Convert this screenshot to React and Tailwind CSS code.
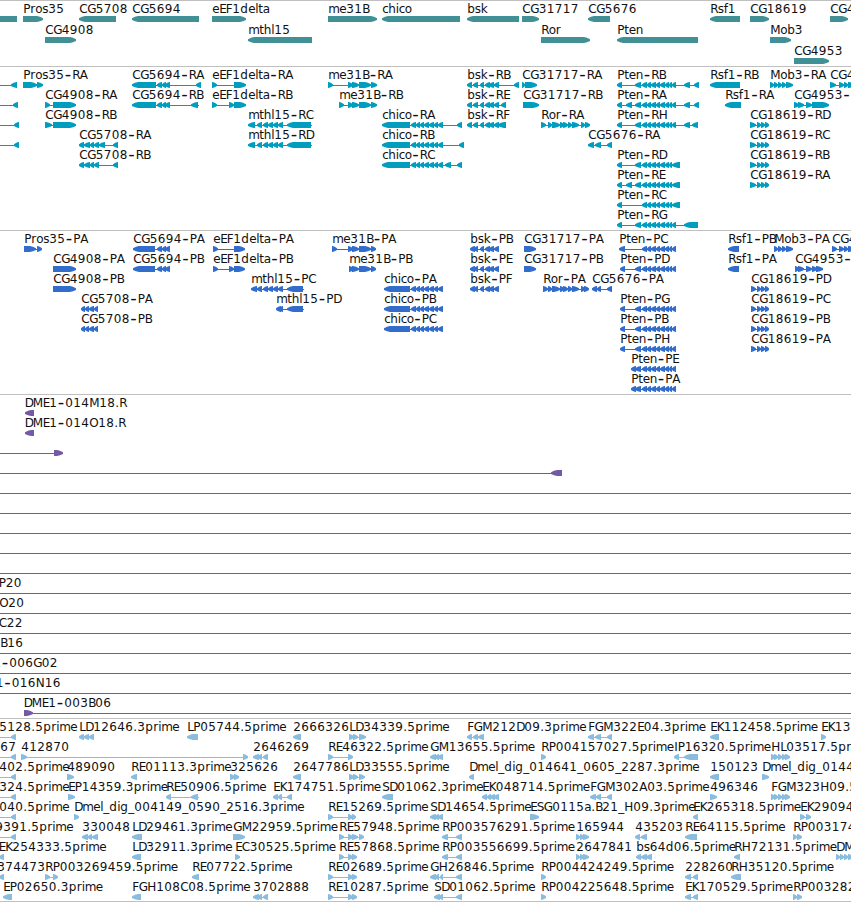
const WIDTH = 851;

// advance of each character in a track label, in px
const advances = {
  A: 8, B: 7, C: 8, D: 8, E: 6.5, F: 6.5, G: 8.5, H: 9, I: 3.5, K: 7, L: 6, M: 10, N: 9, O: 9, P: 7, R: 7.5, S: 7,
  a: 7, b: 7.5, c: 6, d: 8, e: 7, f: 4, g: 8, h: 7.5, i: 3, k: 7, l: 3, m: 11, n: 7.5, o: 7, p: 8, r: 5, s: 6, t: 4.5,
  '.': 4, '-': 8, '_': 6,
};

const pten = '642-647 647-651 651-656 656-660 660-665 665-669 669-672';
const mthl = '257-262 263-268 268-273 273-278 278-283';
const chico = '411-416 416-420 420-424 424-429 429-434 434-438 438-443';
const bsk = '480-484 485-490 489-494 494-499';
const me31 = '352-359 359-371 371-377';
const ror = '548-552 552-560 560-564 563-568 568-572 572-579 581-585';
const cg5694 = '157-162 162-166 165-170';
const cg18619 = '757-761 761-765 765-769';
const hl = '771-775 774-778 778-782 782-786 785-790';

// [row, label, x, strand, exons, line start, line end]
const genes = [
  [0, '', 0, '<', '-20-17'],
  [0, 'Pros35', 23, '>', '23-43'],
  [0, 'CG5708', 79, '<', '79-116'],
  [0, 'CG5694', 132, '<', '132-199'],
  [0, 'eEF1delta', 212, '>', '212-246'],
  [0, 'me31B', 328, '>', '328-377'],
  [0, 'chico', 382, '<', '382-460'],
  [0, 'bsk', 467, '<', '467-519'],
  [0, 'CG31717', 522, '>', '522-539'],
  [0, 'CG5676', 588, '<', '588-610'],
  [0, 'Rsf1', 710, '<', '710-740'],
  [0, 'CG18619', 750, '>', '750-769'],
  [0, 'CG4', 830, '>', '830-848'],
  [1, 'CG4908', 45, '>', '45-76'],
  [1, 'mthl15', 248, '<', '248-312'],
  [1, 'Ror', 541, '>', '541-590'],
  [1, 'Pten', 617, '<', '617-698'],
  [1, 'Mob3', 770, '>', '770-791'],
  [2, 'CG4953', 794, '>', '794-829'],
];

const transcripts = [
  [0, '', 0, '<', '11-17', -5],
  [1, '', 0, '<', '13-18', -5],
  [2, '', 0, '<', '14-19', -5],
  [3, '', 0, '<', '14-19', -5],
  [0, 'Pros35-RA', 23, '>', '23-37 37-43'],
  [0, 'CG5694-RA', 132, '<', `132-156 ${cg5694} 196-201`],
  [0, 'eEF1delta-RA', 212, '>', '212-217 234-246'],
  [0, 'me31B-RA', 328, '>', `328-333 348-353 ${me31}`],
  [0, 'bsk-RB', 467, '<', `467-472 473-478 ${bsk} 514-519`],
  [0, 'CG31717-RA', 522, '>', '522-525 525-537'],
  [0, 'Pten-RB', 617, '<', `617-622 635-641 ${pten} 672-676 684-690 694-699`],
  [0, 'Rsf1-RB', 710, '<', '710-740'],
  [0, 'Mob3-RA', 770, '>', '770-774 774-778 778-782 782-786 786-793'],
  [0, 'CG4', 830, '>', '830-836 839-844 844-848 848-855'],
  [1, 'CG4908-RA', 45, '>', '45-50 53-76'],
  [1, 'CG5694-RB', 132, '<', `132-156 ${cg5694} 191-198`, 132, 199],
  [1, 'eEF1delta-RB', 212, '>', '212-217 229-234 234-246'],
  [1, 'me31B-RB', 339, '>', `339-344 348-353 ${me31}`],
  [1, 'bsk-RE', 467, '<', `467-472 473-478 ${bsk} 501-506`],
  [1, 'CG31717-RB', 523, '>', '523-539'],
  [1, 'Pten-RA', 617, '<', `617-622 626-632 635-641 ${pten} 672-676 684-690 694-699`],
  [1, 'Rsf1-RA', 725, '<', '725-741'],
  [1, 'CG4953-', 794, '>', '794-799 798-804 806-812 812-829'],
  [2, 'CG4908-RB', 45, '>', '45-52 53-76'],
  [2, 'mthl15-RC', 248, '<', `248-255 ${mthl} 287-311`, 248, 312],
  [2, 'chico-RA', 382, '<', `382-410 ${chico} 457-462`],
  [2, 'bsk-RF', 467, '<', `467-472 473-478 ${bsk} 498-506`],
  [2, 'Ror-RA', 541, '>', `541-546 ${ror} 585-590`],
  [2, 'Pten-RH', 617, '<', `617-622 635-641 ${pten} 672-676 684-690 692-698`],
  [2, 'CG18619-RD', 750, '>', `750-756 ${cg18619}`],
  [3, 'CG5708-RA', 79, '<', '79-84 84-90 90-94 94-99 99-105 113-118'],
  [3, 'mthl15-RD', 248, '<', `248-255 ${mthl} 287-311`, 248, 312],
  [3, 'chico-RB', 382, '<', `382-410 ${chico} 459-464`],
  [3, 'CG5676-RA', 588, '<', '588-594 595-601 607-612'],
  [3, 'CG18619-RC', 750, '>', `750-756 ${cg18619}`],
  [4, 'CG5708-RB', 79, '<', '79-84 84-90 90-94 94-99 113-118'],
  [4, 'chico-RC', 382, '<', `382-410 ${chico} 445-451 457-462`],
  [4, 'Pten-RD', 617, '<', `617-622 635-641 ${pten} 672-680`],
  [4, 'CG18619-RB', 750, '>', `750-756 ${cg18619}`],
  [5, 'Pten-RE', 617, '<', `617-622 626-632 635-641 ${pten} 672-680`],
  [5, 'CG18619-RA', 750, '>', `750-756 ${cg18619}`],
  [6, 'Pten-RC', 617, '<', `617-622 ${pten} 672-680`],
  [7, 'Pten-RG', 617, '<', `617-622 635-641 ${pten} 672-676 684-698`],
];

const proteins = [
  [0, 'Pros35-PA', 24, '>', '24-36 37-42'],
  [0, 'CG5694-PA', 133, '<', `133-155 ${cg5694}`],
  [0, 'eEF1delta-PA', 213, '>', '213-218 234-245'],
  [0, 'me31B-PA', 332, '>', '332-337 348-353 352-359 359-371 371-376'],
  [0, 'bsk-PB', 470, '<', `470-475 474-478 ${bsk}`],
  [0, 'CG31717-PA', 524, '>', '524-536'],
  [0, 'Pten-PC', 619, '<', `619-625 ${pten} 672-676`],
  [0, 'Rsf1-PB', 728, '<', '728-739'],
  [0, 'Mob3-PA', 774, '>', '774-778 778-782 782-786 786-793'],
  [0, 'CG4', 832, '>', '832-837 839-844 844-848 848-855'],
  [1, 'CG4908-PA', 53, '>', '53-76'],
  [1, 'CG5694-PB', 133, '<', `133-155 ${cg5694}`],
  [1, 'eEF1delta-PB', 213, '>', '213-218 229-234 234-245'],
  [1, 'me31B-PB', 349, '>', '349-354 352-359 359-371 371-376'],
  [1, 'bsk-PE', 470, '<', `470-475 474-478 ${bsk}`],
  [1, 'CG31717-PB', 524, '>', '524-536'],
  [1, 'Pten-PD', 620, '<', `620-625 635-641 ${pten} 672-676`],
  [1, 'Rsf1-PA', 728, '<', '728-739'],
  [1, 'CG4953-', 795, '>', '795-799 798-804 806-812 812-817 816-823'],
  [2, 'CG4908-PB', 53, '>', '53-76'],
  [2, 'mthl15-PC', 251, '<', `251-257 ${mthl} 287-303`, 251, 304],
  [2, 'chico-PA', 384, '<', `384-410 ${chico}`],
  [2, 'bsk-PF', 470, '<', `470-475 474-478 ${bsk}`],
  [2, 'Ror-PA', 543, '>', `543-548 ${ror} 584-589`],
  [2, 'CG5676-PA', 592, '<', '592-597 597-601 607-612'],
  [2, 'CG18619-PD', 751, '>', `751-756 ${cg18619}`],
  [3, 'CG5708-PA', 81, '<', '81-85 85-89 89-94 94-98'],
  [3, 'mthl15-PD', 276, '<', '276-281 279-283 287-303', 276, 304],
  [3, 'chico-PB', 384, '<', `384-410 ${chico}`],
  [3, 'Pten-PG', 620, '<', `620-625 635-641 ${pten} 672-676`],
  [3, 'CG18619-PC', 751, '>', `751-756 ${cg18619}`],
  [4, 'CG5708-PB', 81, '<', '81-85 85-89 89-94 94-98'],
  [4, 'chico-PC', 384, '<', `384-410 ${chico}`],
  [4, 'Pten-PB', 620, '<', `620-625 635-641 ${pten} 672-676`],
  [4, 'CG18619-PB', 751, '>', `751-756 ${cg18619}`],
  [5, 'Pten-PH', 620, '<', `620-625 635-641 ${pten} 672-676`],
  [5, 'CG18619-PA', 751, '>', `751-756 ${cg18619}`],
  [6, 'Pten-PE', 631, '<', `631-636 635-641 ${pten} 672-676`],
  [7, 'Pten-PA', 631, '<', `631-636 635-641 ${pten} 672-676`],
];

const bacs = [
  [0, 'DME1-014M18.R', 24.5, '<', '25-34'],
  [1, 'DME1-014O18.R', 24.5, '<', '25-34'],
  [2, '', 0, '>', '54-63', -5],
  [3, '', 0, '<', '551-562', -5],
  [4, '', 0, '>', '', -5, WIDTH],
  [5, '', 0, '>', '', -5, WIDTH],
  [6, '', 0, '>', '', -5, WIDTH],
  [7, '', 0, '>', '', -5, WIDTH],
  [8, '', 0, '>', '', -5, WIDTH],
  [9, 'P20', -1.5, '>', '', -5, WIDTH],
  [10, 'O20', -1, '>', '', -5, WIDTH],
  [11, 'C22', -1.5, '>', '', -5, WIDTH],
  [12, 'B16', 0, '>', '', -5, WIDTH],
  [13, '1-006G02', -7, '>', '', -5, WIDTH],
  [14, '1-016N16', -4.5, '>', '', -5, WIDTH],
  [15, 'DME1-003B06', 23.5, '>', '24-33', 24, WIDTH],
];

const ests = [
  [0, '5128.5prime', -1, '<', '11-16', -5],
  [0, 'LD12646.3prime', 79, '<', '79-84 84-89 89-94'],
  [0, 'LP05744.5prime', 187, '<', '187-198'],
  [0, '2666326', 293, '<', '293-301'],
  [0, 'LD34339.5prime', 349, '>', '349-354 353-358 359-366'],
  [0, 'FGM212D09.3prime', 467, '<', '467-472 473-478 478-484'],
  [0, 'FGM322E04.3prime', 588, '<', '588-594 595-601 607-612'],
  [0, 'EK112458.5prime', 710, '<', '710-719'],
  [0, 'EK13', 821, '>', '821-826'],
  [1, '67', 0, '<', '11-16', -5],
  [1, '412870', 21, '>', '21-27 243-248'],
  [1, '2646269', 253, '<', '253-259 258-262 263-268'],
  [1, 'RE46322.5prime', 328, '>', '328-333 348-353'],
  [1, 'GM13655.5prime', 430, '<', '430-436 435-439 438-443'],
  [1, 'RP004157027.5prime', 541, '>', '541-546'],
  [1, 'IP16320.5prime', 674, '<', '674-679 684-698'],
  [1, 'HL03517.5pr', 771, '>', hl],
  [2, '402.5prime', -1, '<', '11-16', -5],
  [2, '489090', 67, '>', '67-74'],
  [2, 'RE01113.3prime', 131, '<', '131-137'],
  [2, '325626', 230, '>', '230-235 234-239'],
  [2, '2647786', 293, '<', '293-301'],
  [2, 'LD33555.5prime', 349, '>', '349-354 353-358 359-365'],
  [2, 'Dmel_dig_014641_0605_2287.3prime', 469, '<', '469-474'],
  [2, '150123', 710, '<', '710-719'],
  [2, 'Dmel_dig_0144', 762, '>', '762-769'],
  [3, '324.5prime', -1, '<', '11-16', -5],
  [3, 'EP14359.3prime', 68, '>', '68-75'],
  [3, 'RE50906.5prime', 166, '<', '166-171 191-198', 166, 199],
  [3, 'EK174751.5prime', 273, '<', '273-278 278-282 287-292'],
  [3, 'SD01062.3prime', 382, '<', '382-393'],
  [3, 'EK048714.5prime', 482, '<', '482-487 487-491 490-495 494-499'],
  [3, 'FGM302A03.5prime', 590, '<', '590-596 596-601 607-612'],
  [3, '496346', 710, '>', '710-717'],
  [3, 'FGM323H09.5', 771, '>', hl],
  [4, '040.5prime', -1, '<', '11-16', -5],
  [4, 'Dmel_dig_004149_0590_2516.3prime', 74, '>', '74-79'],
  [4, 'RE15269.5prime', 328, '>', '328-333 348-353 352-356'],
  [4, 'SD14654.5prime', 430, '<', '430-436 435-439 438-443'],
  [4, 'ESG0115a.B21_H09.3prime', 530, '>', '530-539'],
  [4, 'EK265318.5prime', 693, '<', '693-698'],
  [4, 'EK29094', 800, '>', '800-805 806-811'],
  [5, '9391.5prime', -5, '<', '11-16', -5],
  [5, '330048', 82, '<', '82-88 88-92 92-98'],
  [5, 'LD29461.3prime', 132, '<', '132-142'],
  [5, 'GM22959.5prime', 233, '>', '233-245'],
  [5, 'RE57948.5prime', 339, '>', '339-344 348-353 352-358 359-364'],
  [5, 'RP003576291.5prime', 442, '<', '442-448 456-462'],
  [5, '165944', 576, '>', '576-580 580-584 583-589'],
  [5, '435203', 635, '<', '635-640 641-647'],
  [5, 'RE64115.5prime', 685, '<', '685-697'],
  [5, 'RP003174', 793, '>', '793-797 797-802'],
  [6, 'EK254333.5prime', -1.5, '<', '-1-4'],
  [6, 'LD32911.3prime', 132, '<', '132-141'],
  [6, 'EC30525.5prime', 235, '>', '235-240'],
  [6, 'RE57868.5prime', 339, '>', '339-344 348-353 352-357'],
  [6, 'RP003556699.5prime', 442, '<', '442-448 456-462'],
  [6, '2647841', 576, '>', '576-580 580-584 583-589'],
  [6, 'bs64d06.5prime', 636, '<', '636-641 641-647 646-652'],
  [6, 'RH72131.5prime', 734, '<', '734-740'],
  [6, 'DM', 836, '>', '836-840 840-844 844-848 848-853'],
  [7, '374473', -3, '<', '-1-4'],
  [7, 'RP003269459.5prime', 45, '>', '45-50 53-58'],
  [7, 'RE07722.5prime', 192, '<', '192-199'],
  [7, 'RE02689.5prime', 328, '>', '328-333 348-353 352-357'],
  [7, 'GH26846.5prime', 430, '<', '430-436 435-439 440-443 456-462'],
  [7, 'RP004424249.5prime', 541, '>', '541-546'],
  [7, '228260', 685, '<', '685-691 693-698'],
  [7, 'RH35120.5prime', 731, '<', '731-741'],
  [8, 'EP02650.3prime', 3, '<', '3-12'],
  [8, 'FGH108C08.5prime', 132, '<', '132-141'],
  [8, '3702888', 253, '<', '253-259 258-262 263-268'],
  [8, 'RE10287.5prime', 328, '>', '328-333 348-353 352-357'],
  [8, 'SD01062.5prime', 434, '<', '434-440 439-443 456-462'],
  [8, 'RP004225648.5prime', 541, '>', '541-546'],
  [8, 'EK170529.5prime', 685, '<', '685-691 693-698'],
  [8, 'RP003282', 793, '>', '793-797 797-802'],
];

const tracks = [
  { name: 'genes', features: genes, height: 65, pitch: 21, color: 'fill-[#419096]' },
  { name: 'transcripts', features: transcripts, height: 163, pitch: 20, color: 'fill-[#009dbf]' },
  { name: 'proteins', features: proteins, height: 163, pitch: 20, color: 'fill-[#326dcb]' },
  { name: 'bacs', features: bacs, height: 323, pitch: 20, color: 'fill-[#7459a7]' },
  { name: 'ests', features: ests, height: 182, pitch: 20, color: 'fill-[#8abcde]' },
];

const parseExons = (exons) =>
  [...exons.matchAll(/(-?\d+)-(\d+)/g)].map((m) => [Number(m[1]), Number(m[2])]);

// arrow outline, the head bulges a little so short exons stay readable
const exonPoints = ([start, end], strand) => {
  const head = Math.min(6, end - start - 0.5);
  const tip = strand === '<' ? start : end;
  const back = strand === '<' ? end : start;
  const dir = strand === '<' ? 1 : -1;
  const mid = tip + (dir * head) / 2;
  const neck = tip + dir * head;
  return `${tip},2.3 ${mid},0.8 ${neck},0 ${back},0 ${back},6 ${neck},6 ${mid},5.2 ${tip},4`;
};

const Label = ({ text, x, y }) => {
  let pos = x + 0.3;
  const xs = [...text].map((ch) => {
    const at = ch === '-' ? pos + 0.5 : pos;
    pos += advances[ch] || 8;
    return at;
  });
  const dash = text.indexOf('-');

  return (
    <text x={xs.join(' ')} y={y} className="fill-[#111111] text-[12px]">
      {dash < 0 ? text : (
        <>
          {text.slice(0, dash)}
          <tspan dy="1" className="text-[18px]">-</tspan>
          <tspan dy="-1">{text.slice(dash + 1)}</tspan>
        </>
      )}
    </text>
  );
};

const Feature = ({ feature, pitch }) => {
  const [row, label, x, strand, exonText, from, to] = feature;
  const exons = parseExons(exonText);
  const start = from ?? exons[0][0];
  const end = to ?? exons[exons.length - 1][1];
  const top = row * pitch;

  return (
    <g>
      <rect x={start} y={top + 18} width={end - start} height="1" />
      {exons.map((exon, index) => (
        <polygon key={index} points={exonPoints(exon, strand)} transform={`translate(0 ${top + 15})`} />
      ))}
      {label && <Label text={label} x={x} y={top + 12} />}
    </g>
  );
};

const Track = ({ track }) => (
  <section className="border-t border-[#c0c0c0]">
    <svg width={WIDTH} height={track.height} className={`block ${track.color}`}>
      {track.features.map((feature, index) => (
        <Feature key={index} feature={feature} pitch={track.pitch} />
      ))}
    </svg>
  </section>
);

const App = () => {
  return (
    <div className="flex flex-col w-[851px] h-[902px] overflow-hidden bg-white border-b border-[#c0c0c0] font-['DejaVu_Sans',sans-serif]">
      {tracks.map((track) => (
        <Track key={track.name} track={track} />
      ))}
    </div>
  );
};

export default App;
